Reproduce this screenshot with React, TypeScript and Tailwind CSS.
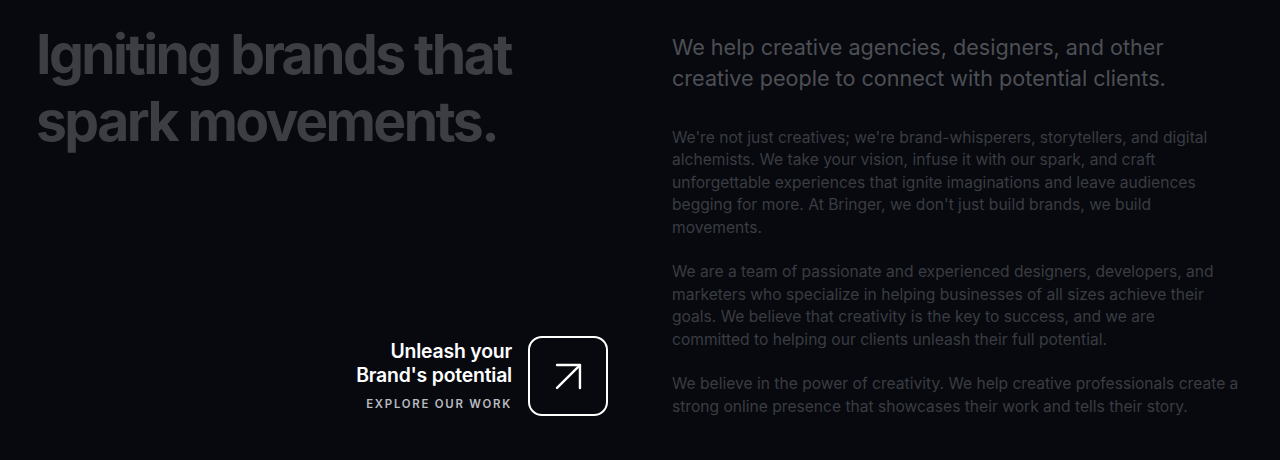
import { ArrowUpRight } from "lucide-react";

export default function App() {
  return (
    <div
      className="min-h-[460px] w-full bg-[#07090e] pl-9 pr-10 pt-[20px] pb-11"
      style={{ fontFamily: "Inter, 'Noto Sans', sans-serif" }}
    >
      <div className="grid grid-cols-[572px_1fr] gap-16">
        <div className="flex flex-col justify-between">
          <h1 className="text-[55.3px] font-bold leading-[67px] tracking-[-0.047em] text-[#3d3e43]">
            Igniting brands that
            <br />
            spark movements.
          </h1>
          <div className="mb-[2px] flex items-end justify-end gap-4">
            <div className="flex flex-col items-end pb-[3px] text-right">
              <p className="text-[19.4px] font-semibold leading-6 tracking-[-0.01em] text-white">
                Unleash your
                <br />
                Brand's potential
              </p>
              <span className="mt-[9px] text-[11.4px] font-semibold tracking-[0.155em] text-[#b9bbc0]">
                EXPLORE OUR WORK
              </span>
            </div>
            <a
              href="#"
              className="flex h-20 w-20 items-center justify-center rounded-[14px] border-2 border-white text-white"
            >
              <ArrowUpRight size={55} strokeWidth={1.05} />
            </a>
          </div>
        </div>
        <div className="pt-[12px]">
          <p className="text-[21.6px] leading-[31px] text-[#4d4f55]">
            We help creative agencies, designers, and other
            <br />
            creative people to connect with potential clients.
          </p>
          <div className="mt-[33px] flex flex-col gap-[22.4px] text-[15.6px] leading-[22.4px] text-[#3a3c42]">
            <p>
              We're not just creatives; we're brand-whisperers, storytellers, and digital alchemists. We take your
              vision, infuse it with our spark, and craft unforgettable experiences that ignite imaginations and
              leave audiences begging for more. At Bringer, we don't just build brands, we build movements.
            </p>
            <p>
              We are a team of passionate and experienced designers, developers, and marketers who specialize in
              helping businesses of all sizes achieve their goals. We believe that creativity is the key to
              success, and we are
              <br />
              committed to helping our clients unleash their full potential.
            </p>
            <p>
              We believe in the power of creativity. We help creative professionals create a strong online
              presence that showcases their work and tells their story.
            </p>
          </div>
        </div>
      </div>
    </div>
  );
}
